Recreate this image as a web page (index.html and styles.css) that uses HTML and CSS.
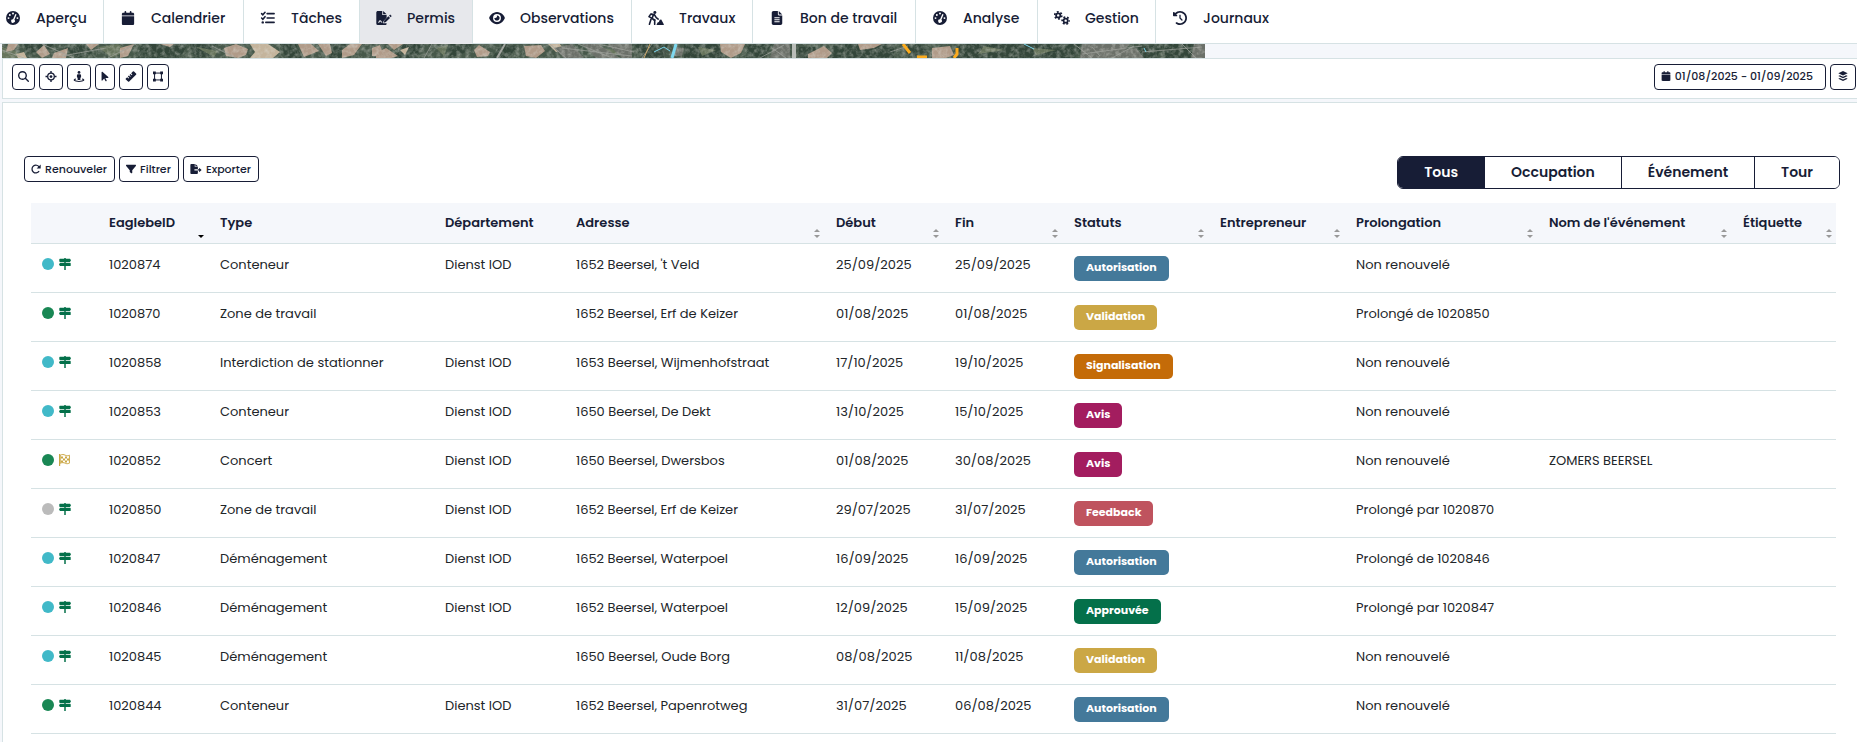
FILE: index.html
```
<!DOCTYPE html>
<html lang="fr">
<head>
	<meta charset="utf-8">
	<title>Permis</title>
	<link rel="stylesheet" href="styles.css">
</head>
<body>
<!-- icons -->
<svg class="sprite" aria-hidden="true">
	<symbol id="i-gauge" viewBox="0 0 16 16"><path fill-rule="evenodd" d="M8 0a8 8 0 1 1 0 16A8 8 0 0 1 8 0zM8 1.8a1.1 1.1 0 1 0 0 2.2 1.1 1.1 0 0 0 0-2.200zM4.400 3.400a1.100 1.100 0 1 0 0 2.200 1.100 1.100 0 0 0 0-2.200zM2.900 7a1.100 1.100 0 1 0 0 2.200 1.100 1.100 0 0 0 0-2.200zM13.100 7a1.100 1.100 0 1 0 0 2.200 1.100 1.100 0 0 0 0-2.200zM10.700 3.500L8.100 9.300a2.100 2.100 0 1 0 1.500.7l2.500-5.900z"/></symbol>
	<symbol id="i-cal" viewBox="0 0 448 512"><path d="M96 32V64H48C21.500 64 0 85.500 0 112v48H448V112c0-26.500-21.500-48-48-48H352V32c0-17.700-14.300-32-32-32s-32 14.300-32 32V64H160V32c0-17.700-14.300-32-32-32S96 14.300 96 32zM448 192H0V464c0 26.500 21.500 48 48 48H400c26.500 0 48-21.500 48-48V192z"/></symbol>
	<symbol id="i-tasks" viewBox="0 0 16 16"><path d="M.7 3l1.400 1.400L4.600 1.500M.7 8l1.400 1.400 2.500-2.900M7 3h8M7 8h8M5.500 13H15" fill="none" stroke="currentColor" stroke-width="1.800" stroke-linecap="round"/><circle cx="2" cy="13" r="1.400"/></symbol>
	<symbol id="i-sign" viewBox="0 0 18 16"><path fill-rule="evenodd" d="M2 0h5v4.500h5v3.300L8.500 11.300 7.800 14H12v.5c0 .8-.7 1.500-1.500 1.500H2a1.800 1.800 0 0 1-1.800-1.800V1.800C.2.8 1 0 2 0zM2.500 13.700c1.500 0 1.500-1.700 2.300-1.700.6 0 .5 1.700 2.200 1.500v-1c-1 .1-.8-1.800-2.400-1.800-1.700 0-1.400 1.900-2.100 1.900z"/><path d="M8 0l4 3.700H8zM16 4.100l1.800 1.700-1.100 1.300-1.900-1.700zM14 6.100l1.900 1.800-4.800 4.800-2.400.7.600-2.500z"/></symbol>
	<symbol id="i-eye" viewBox="0 0 576 512"><path d="M288 32c-80.800 0-145.500 36.800-192.600 80.600C48.600 156 17.300 208 2.500 243.700c-3.300 7.900-3.300 16.700 0 24.600C17.300 304 48.600 356 95.400 399.400C142.500 443.200 207.200 480 288 480s145.500-36.800 192.600-80.600c46.800-43.500 78.100-95.400 93-131.100c3.300-7.900 3.300-16.700 0-24.600c-14.900-35.700-46.200-87.700-93-131.100C433.500 68.800 368.800 32 288 32zM144 256a144 144 0 1 1 288 0 144 144 0 1 1-288 0zm144-64c0 35.300-28.700 64-64 64c-7.100 0-13.900-1.200-20.300-3.300c-5.500-1.800-11.900 1.600-11.700 7.400c.3 6.900 1.300 13.800 3.200 20.700c13.700 51.200 66.400 81.600 117.600 67.900s81.600-66.400 67.900-117.600c-11.100-41.500-47.800-69.400-88.600-71.100c-5.800-.2-9.200 6.100-7.400 11.700c2.100 6.400 3.300 13.200 3.300 20.300z"/></symbol>
	<symbol id="i-dig" viewBox="0 0 18 16"><circle cx="7.700" cy="1.700" r="1.700"/><path d="M3.500 3.500L7 4l2.300 3.500 2.200 1.700M1 6.500l2-3 3 1-1.500 4L7.500 11v4.200M3.300 9.500L1.500 15.200M1 6.500l7 4" fill="none" stroke="currentColor" stroke-width="1.800" stroke-linecap="round" stroke-linejoin="round"/><path d="M9.500 16l1.300-3 1.500-.5 1-2.500 1.700-.3L17.900 15v1z"/></symbol>
	<symbol id="i-file" viewBox="0 0 384 512"><path fill-rule="evenodd" d="M64 0C28.700 0 0 28.700 0 64V448c0 35.300 28.700 64 64 64H320c35.300 0 64-28.700 64-64V160H256c-17.700 0-32-14.300-32-32V0zM256 0V128H384zM96 232h192v36H96zm0 72h192v36H96zm0 72h192v36H96z"/></symbol>
	<symbol id="i-cogs" viewBox="0 0 18 16"><g fill="none" stroke="currentColor"><circle cx="4.700" cy="5" r="2.400" stroke-width="2"/><circle cx="4.700" cy="5" r="4" stroke-width="2" stroke-dasharray="2.100 2.090"/><circle cx="13.200" cy="11" r="2.400" stroke-width="2"/><circle cx="13.200" cy="11" r="4" stroke-width="2" stroke-dasharray="2.100 2.090" stroke-dashoffset="1"/></g></symbol>
	<symbol id="i-history" viewBox="0 0 512 512"><path d="M75 75L41 41C25.900 25.900 0 36.600 0 57.900V168c0 13.300 10.700 24 24 24H134.100c21.400 0 32.100-25.900 17-41l-30.800-30.800C155 85.500 203 64 256 64c106 0 192 86 192 192s-86 192-192 192c-40.800 0-78.600-12.700-109.700-34.400c-14.500-10.100-34.400-6.600-44.600 7.900s-6.600 34.400 7.900 44.600C151.200 495 201.700 512 256 512c141.400 0 256-114.600 256-256S397.400 0 256 0C185.300 0 121.300 28.700 75 75zm181 53c-13.300 0-24 10.700-24 24V256c0 6.400 2.500 12.500 7 17l72 72c9.400 9.400 24.600 9.400 33.900 0s9.400-24.600 0-33.900l-65-65V152c0-13.300-10.700-24-24-24z"/></symbol>
	<symbol id="i-search" viewBox="0 0 512 512"><path fill-rule="evenodd" d="M416 208c0 45.900-14.900 88.300-40 122.700L502.600 457.400c12.500 12.500 12.500 32.800 0 45.300s-32.800 12.500-45.300 0L330.700 376c-34.400 25.200-76.800 40-122.700 40C93.100 416 0 322.900 0 208S93.100 0 208 0S416 93.100 416 208zM208 352a144 144 0 1 0 0-288 144 144 0 1 0 0 288z"/></symbol>
	<symbol id="i-target" viewBox="0 0 16 16"><path d="M8 0v3M8 13v3M0 8h3M13 8h3" stroke="currentColor" stroke-width="2"/><circle cx="8" cy="8" r="4.800" fill="none" stroke="currentColor" stroke-width="1.900"/><circle cx="8" cy="8" r="2"/></symbol>
	<symbol id="i-street" viewBox="0 0 16 16"><circle cx="8" cy="2" r="2"/><path d="M6.500 4.800h3A1.500 1.500 0 0 1 11 6.300V9l-1 .8V13H6V9.800L5 9V6.300a1.500 1.500 0 0 1 1.500-1.500z"/><path d="M3.600 11.500C-1 12.600.5 15.200 8 15.200s9-2.600 4.400-3.700" fill="none" stroke="currentColor" stroke-width="1.500"/></symbol>
	<symbol id="i-pointer" viewBox="0 0 320 512"><path d="M0 55.200V426c0 12.200 9.900 22 22 22c6.300 0 12.400-2.700 16.600-7.500L121.200 346l58.100 116.300c7.900 15.800 27.100 22.200 42.900 14.300s22.200-27.100 14.300-42.900L179.800 320H297.900c12.200 0 22.100-9.900 22.100-22.100c0-6.300-2.700-12.300-7.400-16.500L38.600 37.900C34.300 34.100 28.900 32 23.200 32C10.400 32 0 42.400 0 55.200z"/></symbol>
	<symbol id="i-ruler" viewBox="0 0 16 16"><path d="M.5 11l2-2 1.800 1.800.9-.9-1.800-1.800 1.500-1.500 1.800 1.800.9-.9-1.800-1.800 1.500-1.500 1.800 1.800.9-.9-1.800-1.800L10.700.8a1.200 1.200 0 0 1 1.700 0l2.900 2.900a1.200 1.200 0 0 1 0 1.700l-9.900 9.900a1.200 1.200 0 0 1-1.700 0L.5 12.500a1.100 1.100 0 0 1 0-1.500z"/></symbol>
	<symbol id="i-poly" viewBox="0 0 16 16"><path d="M2.500 2.500h11v11h-11z" fill="none" stroke="currentColor" stroke-width="1.600"/><path d="M0 0h4.500v4.500H0zM11.500 0H16v4.500h-4.500zM0 11.500h4.500V16H0zM11.500 11.500H16V16h-4.500z"/></symbol>
	<symbol id="i-layers" viewBox="0 0 16 16"><path d="M8 0l7.500 3.600L8 7.200.5 3.600z"/><path d="M.5 8L3 6.800l5 2.400 5-2.400L15.500 8 8 11.600zM.5 12.400L3 11.200l5 2.400 5-2.400 2.500 1.200L8 16z"/></symbol>
	<symbol id="i-redo" viewBox="0 0 16 16"><path d="M13.200 5A6.200 6.200 0 1 0 13 11.500" fill="none" stroke="currentColor" stroke-width="2"/><path d="M15.500.8v6.400H9z"/></symbol>
	<symbol id="i-filter" viewBox="0 0 512 512"><path d="M3.900 54.900C10.500 40.900 24.500 32 40 32H472c15.500 0 29.500 8.900 36.100 22.900s4.600 30.500-5.200 42.500L320 320.900V448c0 12.100-6.800 23.200-17.700 28.600s-23.800 4.300-33.500-3l-64-48c-8.100-6-12.800-15.500-12.800-25.600V320.900L9 97.300C-.7 85.400-2.800 68.800 3.900 54.900z"/></symbol>
	<symbol id="i-export" viewBox="0 0 18 16"><path d="M2 0h5v4.500h5v4H6.500v2H12v4a1.500 1.500 0 0 1-1.500 1.500H2A1.800 1.800 0 0 1 0 14.200V1.800A1.800 1.800 0 0 1 2 0zM8 0l4 3.700H8zM12 8.500h2V5.800l4 3.700-4 3.700v-2.700h-2z"/></symbol>
	<symbol id="i-post" viewBox="0 0 12 12"><path d="M5 0h2v1H5zM5 4h2v1H5zM5 8h2v4H5z" opacity=".75"/><path d="M1 .7h10l1 1.600-1 1.700H1a.7.7 0 0 1-.7-.7V1.400A.7.700 0 0 1 1 .7zM11 4.800H1L0 6.400l1 1.700h10a.7.700 0 0 0 .7-.7V5.500a.7.700 0 0 0-.7-.7z"/></symbol>
	<symbol id="i-flag" viewBox="0 0 12 12"><path d="M.6 0v12" stroke="currentColor" stroke-width="1.200"/><path d="M1.200 1.200c2-1 3.500-.8 5 0s2.800.6 4.200 0v8c-1.500.6-2.800.7-4.200 0s-3-.8-5 0z" fill="none" stroke="currentColor"/><path d="M2 2.500h2v2H2zM6 2.500h2v2H6zM4 4.500h2v2H4zM8 4.500h2v2H8zM2 6.500h2v2H2zM6 6.500h2v2H6z"/></symbol>
</svg>

<nav class="menu">
	<a href="#"><svg><use href="#i-gauge"/></svg>Aperçu</a>
	<a href="#"><svg><use href="#i-cal"/></svg>Calendrier</a>
	<a href="#"><svg><use href="#i-tasks"/></svg>Tâches</a>
	<a href="#" class="active"><svg><use href="#i-sign"/></svg>Permis</a>
	<a href="#"><svg><use href="#i-eye"/></svg>Observations</a>
	<a href="#"><svg><use href="#i-dig"/></svg>Travaux</a>
	<a href="#"><svg><use href="#i-file"/></svg>Bon de travail</a>
	<a href="#"><svg><use href="#i-gauge"/></svg>Analyse</a>
	<a href="#"><svg><use href="#i-cogs"/></svg>Gestion</a>
	<a href="#"><svg><use href="#i-history"/></svg>Journaux</a>
</nav>

<main class="page">
	<!-- aerial map -->
	<svg class="map" viewBox="0 0 1203 14" preserveAspectRatio="none">
		<filter id="ground" x="0" y="0" width="100%" height="100%">
			<feTurbulence type="fractalNoise" baseFrequency=".22" numOctaves="3" seed="4"/>
			<feColorMatrix values="0 0 0 0 .75  0 0 0 0 .75  0 0 0 0 .7  1.800 0 0 0 -.7"/>
		</filter>
		<path fill="#46584a" d="M0 0h1203v14H0z"/>
		<path fill="#33463a" d="M22 0l30 0-8 7-18 2zM62 4l22-4 6 9-14 5zM140 0h46l-8 14h-44zM188 0h26l-4 12-18 2zM278 0h16l6 14h-16zM326 0h20l-8 14h-10zM402 0l20 0-8 14h-22zM446 0h24l-8 9-14 5zM500 0l16 2-10 12h-16zM632 0h34l-4 14h-20zM682 0h34l6 14h-40zM746 0h24l-8 14h-18zM797 3h20l-10 11h-10zM832 0h60v14h-68zM900 3l18-3 8 8-20 6zM958 0h128l-14 14H952zM1130 4l32-4-8 14h-18zM1160 0h34l-6 14h-24z"/>
		<path fill="#66745c" d="M0 3l14 4 6 7H0zM96 3l20-3 10 6-16 8zM194 3l22 4-4 6zM434 4l12-3-4 11zM592 3l28 4-12 5zM696 3l18 3-14 6zM982 2l20 4-26 4zM1030 4l24 2-20 5z"/>
		<path fill="#b09b89" d="M6 0l10 0-4 6-8 2zM34 8l8-7 6 9-8 4zM52 9l14-5-2 10H50zM84 0l13 0-8 6zM118 4l14-4-6 12-8 2zM158 0h14l-4 3zM222 4l12-4 12 5-2 6-8 3-12-2zM296 0h13l8 7-15 6zM316 0l12 0 2 9-6 3zM340 6l8-6 12 0-8 11-12 3zM370 4l8-3 4 11h-12zM374 9l10-5 12 8-6 2h-16zM386 0h15l-9 6zM472 6l5-5 11 7-2 4-11 1zM522 2l17-1 4 6-9 7-10-2zM718 0h25l-4 9-10 5-10-6zM806 10l16-8 8 7-5 5h-19zM856 0h24l-8 4-14 2zM930 4l18-2 4 9-8 3h-14z"/>
		<path fill="#c4b49c" d="M248 0h18l12 8-7 6h-23l5-6zM398 6l9-3-4 8zM546 0h12l4 6-8 2zM14 10l8-2 3 6h-9z"/>
		<path fill="#6b7069" d="M552 4l18-4 12 14h-20zM580 0h16l22 14h-24zM606 0h24v14h-10zM672 3l10 1-2 8h-8zM772 0h16v14h-20zM1080 0h48l-12 14h-38zM1118 6l16-2 8 10h-28zM1192 0h11v14h-14z"/>
		<path filter="url(#ground)" d="M0 0h1203v14H0z" opacity=".5"/>
		<g fill="none" stroke="#a2a5a0">
			<path d="M0 6l22 8M40 0l32 14M106 14L134 0M60 12l44-8M210 2l24 12M430 0l-8 14M548 0l16 14M560 4l70 8M576 0l34 14M596 0l36 8M650 0l-10 14M758 14l24-13M770 4l14 10M1072 0l18 14M1080 10l60-8M1090 3l8 9M1110 14l22-12M1140 8l60-5M1180 0l14 14M888 8l18-6" opacity=".7"/>
			<path d="M503 0l-8 14" stroke-width="2"/><path d="M792 0v14" stroke="#b9bdb8" stroke-width="4"/>
		</g>
		<g fill="none" stroke="#7ed8ef"><path d="M674 0l-4 14" stroke-width="3"/><path d="M652 8l10-5 6 4M1022 0l10 5M1142 4l2 4"/></g>
		<g fill="none" stroke="#fbab1e" stroke-width="3"><path d="M901 0l7 9M915 13h10M955 4v6l-3 4"/><path d="M648 0l-6 14" stroke="#c9a566" stroke-width="1"/></g>
	</svg>

	<div class="toolbar">
		<button class="btn" aria-label="Rechercher"><svg class="w11"><use href="#i-search"/></svg></button>
		<button class="btn" aria-label="Centrer"><svg><use href="#i-target"/></svg></button>
		<button class="btn" aria-label="Vue de rue"><svg><use href="#i-street"/></svg></button>
		<button class="btn" aria-label="Sélectionner"><svg class="w8"><use href="#i-pointer"/></svg></button>
		<button class="btn" aria-label="Mesurer"><svg><use href="#i-ruler"/></svg></button>
		<button class="btn" aria-label="Dessiner"><svg class="w10"><use href="#i-poly"/></svg></button>
		<button class="btn text dates"><svg><use href="#i-cal"/></svg>01/08/2025 - 01/09/2025</button>
		<button class="btn text" aria-label="Couches"><svg class="w12"><use href="#i-layers"/></svg></button>
	</div>

	<div class="list">
		<div class="actions">
			<button class="btn text"><svg><use href="#i-redo"/></svg>Renouveler</button>
			<button class="btn text"><svg><use href="#i-filter"/></svg>Filtrer</button>
			<button class="btn text"><svg class="w12"><use href="#i-export"/></svg>Exporter</button>
			<div class="tabs">
				<button class="active">Tous</button>
				<button>Occupation</button>
				<button>Événement</button>
				<button>Tour</button>
			</div>
		</div>

		<table class="grid">
			<colgroup>
				<col class="c-icon"><col class="c-id"><col class="c-type"><col class="c-dep"><col class="c-adr"><col class="c-date"><col class="c-date"><col class="c-stat"><col class="c-entr"><col class="c-prol"><col class="c-nom"><col class="c-etiq">
			</colgroup>
			<thead>
				<tr>
					<th></th>
					<th class="sort desc">EaglebeID</th>
					<th>Type</th>
					<th>Département</th>
					<th class="sort">Adresse</th>
					<th class="sort">Début</th>
					<th class="sort">Fin</th>
					<th class="sort">Statuts</th>
					<th class="sort">Entrepreneur</th>
					<th class="sort">Prolongation</th>
					<th class="sort">Nom de l'événement</th>
					<th class="sort">Étiquette</th>
				</tr>
			</thead>
			<tbody>
				<tr><td><i class="dot cyan"></i><svg class="post"><use href="#i-post"/></svg></td><td>1020874</td><td>Conteneur</td><td>Dienst IOD</td><td>1652 Beersel, 't Veld</td><td>25/09/2025</td><td>25/09/2025</td><td><span class="badge autorisation">Autorisation</span></td><td></td><td>Non renouvelé</td><td></td><td></td></tr>
				<tr><td><i class="dot green"></i><svg class="post"><use href="#i-post"/></svg></td><td>1020870</td><td>Zone de travail</td><td></td><td>1652 Beersel, Erf de Keizer</td><td>01/08/2025</td><td>01/08/2025</td><td><span class="badge validation">Validation</span></td><td></td><td>Prolongé de 1020850</td><td></td><td></td></tr>
				<tr><td><i class="dot cyan"></i><svg class="post"><use href="#i-post"/></svg></td><td>1020858</td><td>Interdiction de stationner</td><td>Dienst IOD</td><td>1653 Beersel, Wijmenhofstraat</td><td>17/10/2025</td><td>19/10/2025</td><td><span class="badge signalisation">Signalisation</span></td><td></td><td>Non renouvelé</td><td></td><td></td></tr>
				<tr><td><i class="dot cyan"></i><svg class="post"><use href="#i-post"/></svg></td><td>1020853</td><td>Conteneur</td><td>Dienst IOD</td><td>1650 Beersel, De Dekt</td><td>13/10/2025</td><td>15/10/2025</td><td><span class="badge avis">Avis</span></td><td></td><td>Non renouvelé</td><td></td><td></td></tr>
				<tr><td><i class="dot green"></i><svg class="flag"><use href="#i-flag"/></svg></td><td>1020852</td><td>Concert</td><td>Dienst IOD</td><td>1650 Beersel, Dwersbos</td><td>01/08/2025</td><td>30/08/2025</td><td><span class="badge avis">Avis</span></td><td></td><td>Non renouvelé</td><td>ZOMERS BEERSEL</td><td></td></tr>
				<tr><td><i class="dot grey"></i><svg class="post"><use href="#i-post"/></svg></td><td>1020850</td><td>Zone de travail</td><td>Dienst IOD</td><td>1652 Beersel, Erf de Keizer</td><td>29/07/2025</td><td>31/07/2025</td><td><span class="badge feedback">Feedback</span></td><td></td><td>Prolongé par 1020870</td><td></td><td></td></tr>
				<tr><td><i class="dot cyan"></i><svg class="post"><use href="#i-post"/></svg></td><td>1020847</td><td>Déménagement</td><td>Dienst IOD</td><td>1652 Beersel, Waterpoel</td><td>16/09/2025</td><td>16/09/2025</td><td><span class="badge autorisation">Autorisation</span></td><td></td><td>Prolongé de 1020846</td><td></td><td></td></tr>
				<tr><td><i class="dot cyan"></i><svg class="post"><use href="#i-post"/></svg></td><td>1020846</td><td>Déménagement</td><td>Dienst IOD</td><td>1652 Beersel, Waterpoel</td><td>12/09/2025</td><td>15/09/2025</td><td><span class="badge approuvee">Approuvée</span></td><td></td><td>Prolongé par 1020847</td><td></td><td></td></tr>
				<tr><td><i class="dot cyan"></i><svg class="post"><use href="#i-post"/></svg></td><td>1020845</td><td>Déménagement</td><td></td><td>1650 Beersel, Oude Borg</td><td>08/08/2025</td><td>11/08/2025</td><td><span class="badge validation">Validation</span></td><td></td><td>Non renouvelé</td><td></td><td></td></tr>
				<tr><td><i class="dot green"></i><svg class="post"><use href="#i-post"/></svg></td><td>1020844</td><td>Conteneur</td><td>Dienst IOD</td><td>1652 Beersel, Papenrotweg</td><td>31/07/2025</td><td>06/08/2025</td><td><span class="badge autorisation">Autorisation</span></td><td></td><td>Non renouvelé</td><td></td><td></td></tr>
			</tbody>
		</table>
	</div>
</main>
</body>
</html>
```

FILE: styles.css
```
*{box-sizing:border-box;}
body{
	margin:0;
	min-height:100vh;
	display:flex;
	flex-direction:column;
	background:#f5f7fb;
	color:#171d36;
	font-family:Poppins, Inter, sans-serif;
	font-size:13px;
	line-height:18px;
}
button{font-family:inherit;color:inherit;cursor:pointer;}
svg{fill:currentColor;flex:none;}
.sprite{position:absolute;width:0;height:0;}

/* top menu */
.menu{
	display:grid;
	grid-template-columns:104px 140px 116px 113px 159px 121px 163px 122px 118px auto;
	height:44px;
	background:#fff;
	border-bottom:1px solid #d6e2e4;
}
.menu a{
	display:flex;
	align-items:center;
	gap:15px;
	padding:0 0 7px 16px;
	border-right:1px solid #d6e2e4;
	color:#171d36;
	font-size:14px;
	font-weight:500;
	text-decoration:none;
	white-space:nowrap;
}
.menu a:first-child{padding-left:5px;}
.menu a:last-child{border-right:0;}
.menu a.active{background:#e7e8ec;margin-bottom:-1px;padding-bottom:8px;}
.menu svg{width:16px;height:14px;}

.page{flex:1;display:flex;flex-direction:column;margin-left:2px;}
.map{width:1203px;max-width:100%;height:14px;}

.btn{
	display:flex;
	align-items:center;
	height:26px;
	padding:0 5px;
	background:#fff;
	border:1px solid #171d36;
	border-radius:4px;
	font-size:11px;
	font-weight:500;
	white-space:nowrap;
}
.btn.text{gap:4px;padding:0 6px;}
.btn svg{width:12px;height:11px;}
.btn.text svg{width:10px;height:10px;}
.btn .w8{width:8px;}
.btn .w10{width:10px;}
.btn .w11{width:11px;}
.btn.text .w12{width:12px;}

.toolbar{
	display:flex;
	gap:4px;
	padding:5px 1px 8px 9px;
	background:#fff;
	border:1px solid #d6e2e4;
	border-right:0;
}
.toolbar .btn{padding-bottom:2px;}
.toolbar .dates{margin-left:auto;padding-right:12px;}

/* list of permits */
.list{
	flex:1;
	margin-top:3px;
	padding:53px 17px 8px 21px;
	background:#fff;
	border:1px solid #d6e2e4;
	border-width:1px 0 0 1px;
}
.actions{display:flex;align-items:flex-start;gap:4px;}
.actions .btn{padding-right:7px;}
.tabs{display:flex;margin-left:auto;border:1px solid #171d36;border-radius:6px;overflow:hidden;}
.tabs button{
	height:31px;
	padding:0 26px;
	background:#fff;
	border:0;
	border-left:1px solid #171d36;
	font-size:14px;
	font-weight:600;
}
.tabs button:first-child{border-left:0;}
.tabs .active{background:#171d36;color:#fff;}

.grid{
	width:calc(100% - 11px);
	margin:14px 4px 0 7px;
	table-layout:fixed;
	border-collapse:separate;
	border-spacing:0;
}
.c-icon{width:66px;}
.c-id{width:111px;}
.c-type{width:225px;}
.c-dep{width:131px;}
.c-adr{width:260px;}
.c-date{width:119px;}
.c-stat{width:146px;}
.c-entr{width:136px;}
.c-prol{width:193px;}
.c-nom{width:194px;}
.c-etiq{width:105px;}
.grid th{
	position:relative;
	height:41px;
	padding:0 0 0 12px;
	background:#f5f7fb;
	border-bottom:1px solid #d6e2e4;
	font-weight:600;
	text-align:left;
	white-space:nowrap;
}
.grid td{
	height:49px;
	padding:12px 0 11px 12px;
	border-bottom:1px solid #d6e2e4;
	color:#212529;
	vertical-align:top;
	white-space:nowrap;
}
.grid td:first-child{padding-left:11px;}

/* sort arrows */
.sort:before,.sort:after{
	content:"";
	position:absolute;
	right:4px;
	border:3px solid transparent;
}
.sort:before{bottom:11px;border-top-width:0;border-bottom:3px solid #999;}
.sort:after{bottom:5px;border-bottom-width:0;border-top:3px solid #999;}
.sort.desc:before{display:none;}
.sort.desc:after{border-top-color:#000;}

.dot{display:inline-block;width:12px;height:12px;margin:2px 5px 0 0;border-radius:50%;vertical-align:top;}
.cyan{background:#41b9c8;}
.green{background:#198754;}
.grey{background:#bbb;}
.post,.flag{width:12px;height:12px;margin-top:2px;vertical-align:top;}
.post{color:#04704a;}
.flag{color:#cba745;}

.badge{
	display:inline-block;
	height:25px;
	padding:0 12px;
	border-radius:5px;
	color:#fff;
	font-size:11px;
	font-weight:700;
	line-height:23px;
	vertical-align:top;
}
.autorisation{background:#44799a;}
.validation{background:#cba745;}
.signalisation{background:#c46b08;}
.avis{background:#a31d5f;}
.feedback{background:#bf535e;}
.approuvee{background:#04704a;}
```
